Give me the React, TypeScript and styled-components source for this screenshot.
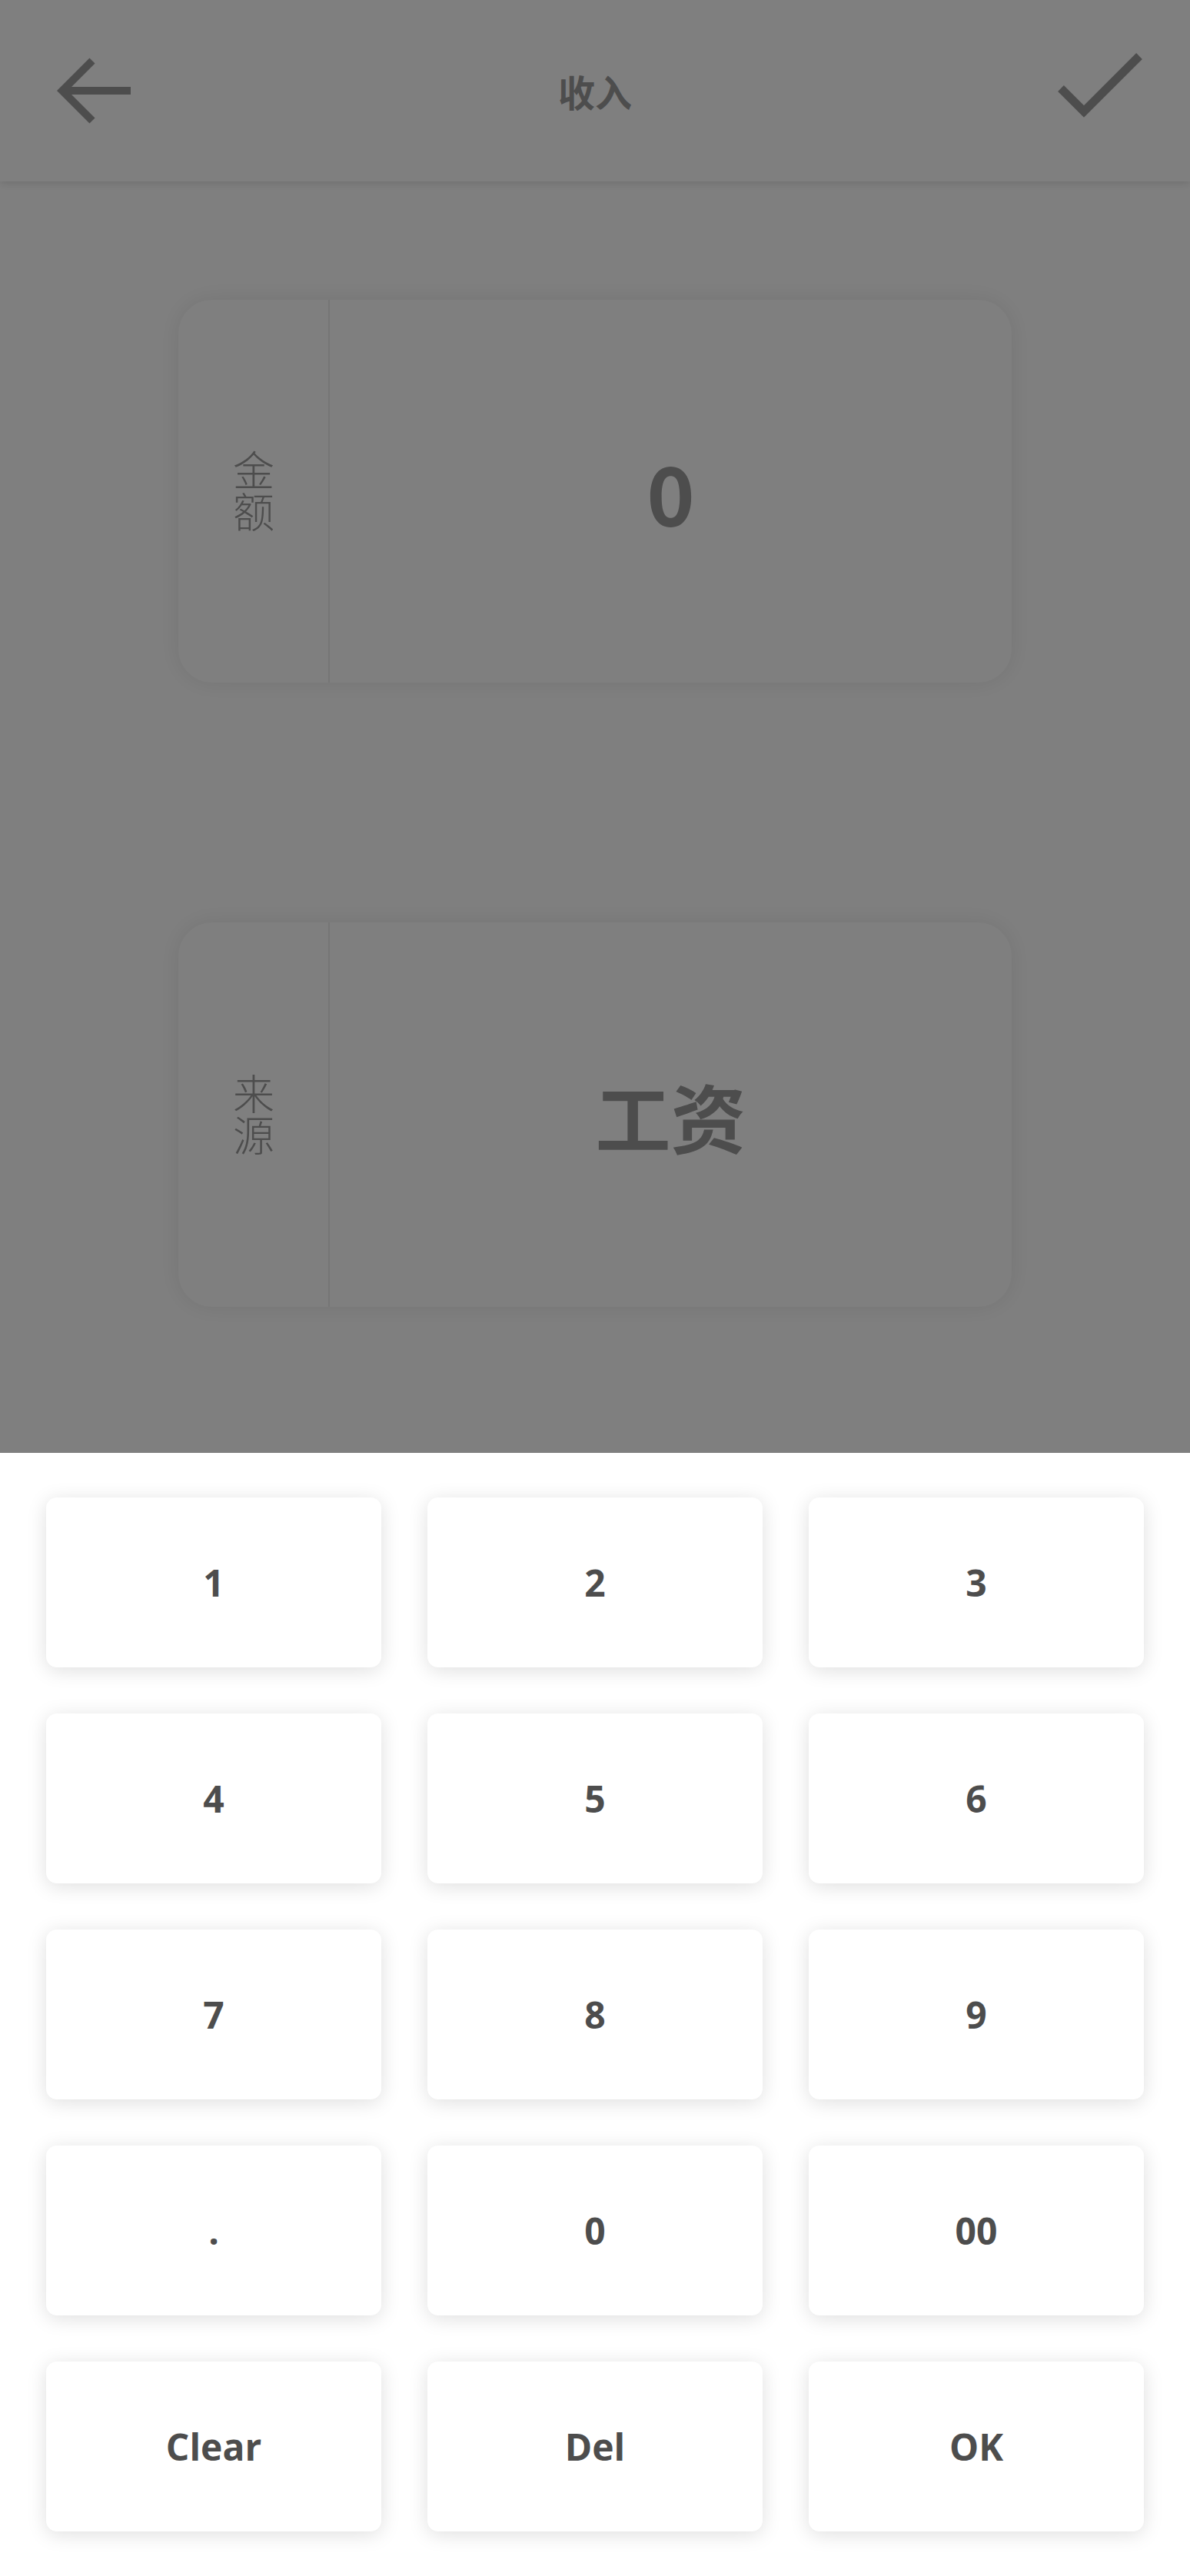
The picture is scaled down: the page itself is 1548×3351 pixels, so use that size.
import styled, { createGlobalStyle } from "styled-components";

const KEYS = ["1", "2", "3", "4", "5", "6", "7", "8", "9", ".", "0", "00", "Clear", "Del", "OK"];

const GlobalStyle = createGlobalStyle`
  html, body {
    margin: 0;
    padding: 0;
    background: #ffffff;
  }
  body {
    font-family: "Noto Sans CJK SC", "Noto Sans", sans-serif;
  }
`;

const App = () => {
  return (
    <>
      <GlobalStyle />
      <Page>
        <Header>
          <IconButton aria-label="back">
            <svg width="100" height="90" viewBox="0 0 100 90">
              <path d="M46 6 L7 45 L46 84" fill="none" stroke="#9a9a9a" strokeWidth="10" />
              <path d="M8 45 H96" fill="none" stroke="#9a9a9a" strokeWidth="10" />
            </svg>
          </IconButton>
          <Title>收入</Title>
          <IconButton aria-label="confirm" $right>
            <svg width="120" height="96" viewBox="0 0 120 96">
              <path d="M10 46 L40 76 L112 4" fill="none" stroke="#9a9a9a" strokeWidth="11" />
            </svg>
          </IconButton>
        </Header>

        <Main>
          <FieldCard $height={498}>
            <FieldLabel>
              <LabelText>金额</LabelText>
            </FieldLabel>
            <FieldValue $size={106}>0</FieldValue>
          </FieldCard>
          <FieldCard $height={500}>
            <FieldLabel>
              <LabelText>来源</LabelText>
            </FieldLabel>
            <FieldValue $size={98}>工资</FieldValue>
          </FieldCard>
        </Main>
      </Page>

      <Backdrop>
        <Sheet>
          <KeyGrid>
            {KEYS.map((k) => (
              <Key key={k}>{k}</Key>
            ))}
          </KeyGrid>
        </Sheet>
      </Backdrop>
    </>
  );
};

const Page = styled.div`
  min-height: 100vh;
  background: #ffffff;
`;

const Header = styled.header`
  height: 236px;
  display: grid;
  grid-template-columns: 1fr auto 1fr;
  align-items: center;
  padding: 0 58px;
  box-shadow: 0 3px 10px rgba(0, 0, 0, 0.12);
  background: #ffffff;
`;

const IconButton = styled.div<{ $right?: boolean }>`
  display: flex;
  align-items: center;
  justify-self: ${(p) => (p.$right ? "end" : "start")};
  margin-left: ${(p) => (p.$right ? "0" : "16px")};
  margin-top: ${(p) => (p.$right ? "-2px" : "0")};
`;

const Title = styled.div`
  font-family: "Noto Sans CJK SC", sans-serif;
  font-size: 48px;
  font-weight: 700;
  color: #9a9a9a;
  line-height: 1;
`;

const Main = styled.main`
  display: flex;
  flex-direction: column;
  align-items: center;
  padding-top: 154px;
  gap: 312px;
`;

const FieldCard = styled.section<{ $height: number }>`
  width: 1084px;
  height: ${(p) => p.$height}px;
  display: flex;
  border-radius: 44px;
  background: #ffffff;
  box-shadow: 0 0 30px rgba(0, 0, 0, 0.09);
  overflow: hidden;
`;

const FieldLabel = styled.div`
  width: 195px;
  flex-shrink: 0;
  display: flex;
  align-items: center;
  justify-content: center;
  border-right: 2px solid #ececec;
`;

const LabelText = styled.span`
  writing-mode: vertical-rl;
  font-family: "Noto Sans CJK SC", sans-serif;
  font-size: 54px;
  font-weight: 300;
  line-height: 1;
  color: #9a9a9a;
`;

const FieldValue = styled.div<{ $size: number }>`
  flex: 1;
  display: flex;
  align-items: center;
  justify-content: center;
  font-family: "Noto Sans CJK SC", sans-serif;
  font-size: ${(p) => p.$size}px;
  font-weight: 700;
  color: #9a9a9a;
`;

const Backdrop = styled.div`
  position: fixed;
  inset: 0;
  display: flex;
  flex-direction: column;
  justify-content: flex-end;
  background: rgba(0, 0, 0, 0.5);
`;

const Sheet = styled.div`
  background: #ffffff;
  padding: 58px 0 58px;
`;

const KeyGrid = styled.div`
  display: grid;
  grid-template-columns: repeat(3, 436px);
  grid-auto-rows: 221px;
  column-gap: 60px;
  row-gap: 60px;
  justify-content: center;
`;

const Key = styled.button`
  border: none;
  border-radius: 14px;
  background: #ffffff;
  box-shadow: 0 4px 26px rgba(0, 0, 0, 0.13);
  display: flex;
  align-items: center;
  justify-content: center;
  font-family: "Open Sans", "Noto Sans", sans-serif;
  font-size: 48px;
  font-weight: 700;
  color: #4d4d4d;
  padding: 0;
`;

export default App;
